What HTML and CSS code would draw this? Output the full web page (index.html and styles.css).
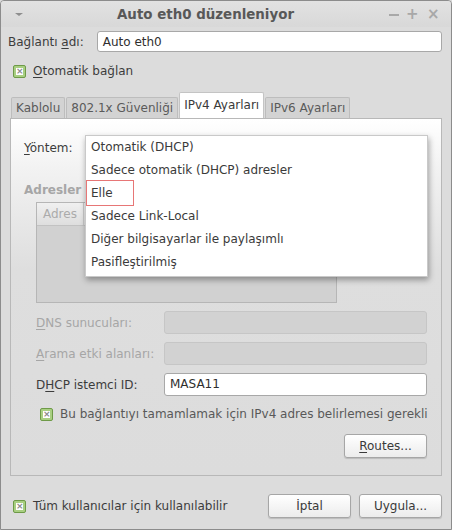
FILE: index.html
```html
<!DOCTYPE html>
<html lang="tr">
<head>
  <meta charset="UTF-8" />
  <title>Auto eth0 düzenleniyor</title>
  <link rel="stylesheet" href="styles.css">
</head>
<body>
  <div class="window">
    <div class="titlebar">
      <span class="menu-arrow"></span>
      <span class="title">Auto eth0 düzenleniyor</span>
      <span class="wm-buttons">
        <span class="wm wm-min"></span>
        <span class="wm wm-max">+</span>
        <span class="wm wm-close">&#215;</span>
      </span>
    </div>

    <div class="content">
      <div class="name-row">
        <label>Bağlantı <u>a</u>dı:</label>
        <div class="entry">Auto eth0</div>
      </div>

      <div class="check-row top-check">
        <span class="check"></span>
        <span><u>O</u>tomatik bağlan</span>
      </div>

      <div class="notebook">
        <div class="tabs">
          <span class="tab">Kablolu</span>
          <span class="tab">802.1x Güvenliği</span>
          <span class="tab active">IPv4 Ayarları</span>
          <span class="tab">IPv6 Ayarları</span>
        </div>
        <div class="panel">
          <div class="method-row"><u>Y</u>öntem:</div>
          <div class="section-title">Adresler</div>
          <div class="addr-table">
            <div class="addr-head"><span>Adres</span></div>
          </div>

          <div class="field-row disabled">
            <label><u>D</u>NS sunucuları:</label>
            <div class="entry off"></div>
          </div>
          <div class="field-row disabled">
            <label><u>A</u>rama etki alanları:</label>
            <div class="entry off"></div>
          </div>
          <div class="field-row">
            <label>D<u>H</u>CP istemci ID:</label>
            <div class="entry">MASA11</div>
          </div>

          <div class="check-row req-check">
            <span class="check"></span>
            <span>Bu bağlantıyı tamamlamak için IPv4 adres belirlemesi gerekli</span>
          </div>

          <div class="routes-row">
            <button class="btn routes"><u>R</u>outes...</button>
          </div>

          <ul class="popup">
            <li>Otomatik (DHCP)</li>
            <li>Sadece otomatik (DHCP) adresler</li>
            <li class="marked">Elle</li>
            <li>Sadece Link-Local</li>
            <li>Diğer bilgisayarlar ile paylaşımlı</li>
            <li>Pasifleştirilmiş</li>
          </ul>
        </div>
      </div>

      <div class="footer">
        <div class="check-row">
          <span class="check"></span>
          <span>Tüm kullanıcılar için kullanılabilir</span>
        </div>
        <div class="footer-buttons">
          <button class="btn">İptal</button>
          <button class="btn">Uygula...</button>
        </div>
      </div>
    </div>
  </div>
</body>
</html>
```

FILE: styles.css
```css
body {
  margin: 0;
  padding: 0;
  font-family: "DejaVu Sans", sans-serif;
  font-size: 12px;
  color: #3c3c3c;
  background: #dcdcdc;
}

u {
  text-decoration: underline;
  text-underline-offset: 2px;
}

.window {
  width: 452px;
  height: 530px;
  box-sizing: border-box;
  border: 1px solid #8c8c8c;
  border-radius: 4px 4px 0 0;
  background: #dcdcdc;
  overflow: hidden;
}

.titlebar {
  height: 26px;
  display: flex;
  align-items: center;
  background: linear-gradient(#e2e2e2, #d8d8d8);
}

.menu-arrow {
  flex: none;
  margin-left: 14px;
  width: 0;
  height: 0;
  border-left: 4px solid transparent;
  border-right: 4px solid transparent;
  border-top: 3px solid #8e8e8e;
}

.title {
  flex: 1;
  text-align: center;
  font-weight: bold;
  font-size: 13.4px;
  color: #585858;
  white-space: nowrap;
}

.wm-buttons {
  flex: none;
  display: flex;
  align-items: center;
  margin-right: 12px;
}

.wm {
  display: block;
  flex: none;
  width: 12px;
  height: 14px;
  line-height: 14px;
  text-align: center;
  color: #a8a8a8;
  font-size: 15px;
  font-weight: bold;
}

.wm-min {
  position: relative;
}

.wm-min::after {
  content: "";
  position: absolute;
  left: 1px;
  top: 7px;
  width: 10px;
  height: 2px;
  background: #a8a8a8;
}

.wm-max {
  margin-left: 6px;
}

.wm-close {
  margin-left: 9px;
}

.content {
  padding: 4px 9px 0 7px;
}

.name-row {
  display: flex;
  align-items: center;
  gap: 13px;
}

.entry {
  flex: 1;
  height: 21px;
  line-height: 21px;
  box-sizing: border-box;
  padding: 0 5px;
  background: #fff;
  border: 1px solid #a8a8a8;
  border-radius: 3px;
  color: #2e2e2e;
}

.entry.off {
  background: #d2d2d2;
  border-color: #c6c6c6;
}

.check-row {
  display: flex;
  align-items: center;
  gap: 7px;
  white-space: nowrap;
}

.check {
  width: 13px;
  height: 13px;
  box-sizing: border-box;
  border: 1px solid #6e9a48;
  border-radius: 2px;
  background: #a9cf82;
  position: relative;
  flex: none;
}

.check::after {
  content: "×";
  position: absolute;
  left: 2px;
  top: 2px;
  width: 7px;
  height: 7px;
  background: #fff;
  color: #8a8a8a;
  font-size: 9px;
  line-height: 7px;
  text-align: center;
  font-weight: bold;
}

.top-check {
  margin: 12px 0 0 5px;
}

.notebook {
  margin: 14px 0 0 2px;
}

.tabs {
  display: flex;
  align-items: flex-end;
  height: 26px;
  padding-left: 1px;
}

.tab {
  height: 20px;
  line-height: 20px;
  padding: 0 4px;
  margin-right: 1px;
  background: #d3d3d3;
  border: 1px solid #bdbdbd;
  border-bottom: none;
  border-radius: 2px 2px 0 0;
  color: #5a5a5a;
}

.tab.active {
  height: 26px;
  line-height: 24px;
  padding: 0 4px;
  background: #fff;
  color: #3a3a3a;
  border-color: #c4c4c4;
  position: relative;
  top: 1px;
}

.panel {
  position: relative;
  height: 358px;
  box-sizing: border-box;
  border: 1px solid #b8b8b8;
  background: linear-gradient(#ffffff 0, #f2f2f2 50px, #dedede 150px, #dcdcdc);
  padding: 0 14px 0 13px;
}

.method-row {
  margin-top: 22px;
  height: 16px;
}

.section-title {
  margin-top: 26px;
  font-weight: bold;
  color: #a6a6a6;
}

.addr-table {
  margin: 5px 0 0 12px;
  width: 301px;
  height: 101px;
  box-sizing: border-box;
  border: 1px solid #b6b6b6;
  background: #d1d1d1;
}

.addr-head {
  height: 22px;
  line-height: 22px;
  background: linear-gradient(#f0f0f0, #dedede);
  border-bottom: 1px solid #c2c2c2;
}

.addr-head span {
  display: inline-block;
  padding: 0 6px;
  color: #ababab;
  border-right: 1px solid #c8c8c8;
}

.field-row {
  display: flex;
  align-items: center;
  margin: 8px 0 0 12px;
}

.field-row label {
  width: 128px;
}

.field-row .entry {
  height: 23px;
  line-height: 21px;
}

.field-row.disabled label {
  color: #a6a6a6;
}

.req-check {
  margin: 11px 0 0 16px;
  color: #595959;
}

.routes-row {
  display: flex;
  justify-content: flex-end;
  margin-top: 13px;
}

.btn {
  font-family: "DejaVu Sans", sans-serif;
  font-size: 12px;
  color: #3a3a3a;
  width: 83px;
  height: 24px;
  padding: 0;
  background: linear-gradient(#ffffff, #ececec);
  border: 1px solid #a6a6a6;
  border-radius: 3px;
  box-shadow: 0 1px 1px rgba(0,0,0,0.15);
}

.popup {
  position: absolute;
  left: 74px;
  top: 16px;
  width: 341px;
  margin: 0;
  padding: 0 0 2px;
  list-style: none;
  background: #fff;
  border: 1px solid #c9c9c9;
  box-shadow: 1px 3px 6px rgba(0,0,0,0.35);
}

.popup li {
  height: 23px;
  line-height: 23px;
  padding-left: 5px;
  color: #3a3a3a;
}

.popup li.marked {
  position: relative;
}

.popup li.marked::after {
  content: "";
  position: absolute;
  left: 0;
  top: -2px;
  width: 48px;
  height: 26px;
  box-sizing: border-box;
  border: 1px solid #e77676;
}

.footer {
  display: flex;
  justify-content: space-between;
  align-items: center;
  margin-top: 18px;
}

.footer .check-row {
  margin-left: 5px;
}

.footer-buttons {
  display: flex;
  gap: 8px;
}
```
